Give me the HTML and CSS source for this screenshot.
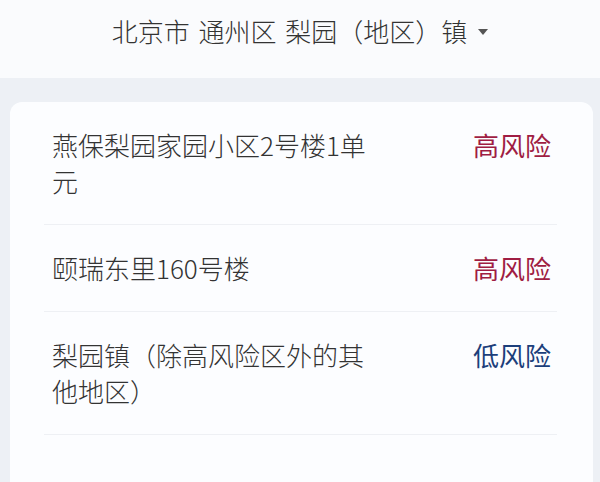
FILE: index.html
```html
<!DOCTYPE html>
<html lang="zh-CN">
<head>
  <meta charset="UTF-8">
  <title>风险等级</title>
  <link rel="stylesheet" href="styles.css">
</head>
<body>
  <div class="header">
    <span class="area">北京市 通州区 梨园（地区）镇</span>
    <span class="arrow"></span>
  </div>

  <div class="card">
    <div class="row">
      <span class="place">燕保梨园家园小区2号楼1单元</span>
      <span class="level high">高风险</span>
    </div>
    <div class="row">
      <span class="place">颐瑞东里160号楼</span>
      <span class="level high">高风险</span>
    </div>
    <div class="row">
      <span class="place">梨园镇（除高风险区外的其他地区）</span>
      <span class="level low">低风险</span>
    </div>
  </div>
</body>
</html>
```

FILE: styles.css
```css
* {
  margin: 0;
  padding: 0;
  box-sizing: border-box;
}

body {
  font-family: "Noto Sans CJK SC", "Noto Sans", sans-serif;
  font-weight: 300;
  background-color: #edf0f5;
  color: #333;
  height: 482px;
  overflow: hidden;
}

.header {
  height: 78px;
  background-color: #fafbfd;
  display: flex;
  justify-content: center;
  align-items: flex-start;
  padding-top: 13px;
  font-size: 26px;
  line-height: 36px;
}

.area {
  word-spacing: 3px;
}

.arrow {
  width: 0;
  height: 0;
  border-left: 5px solid transparent;
  border-right: 5px solid transparent;
  border-top: 6px solid #555;
  margin-left: 11px;
  margin-top: 16px;
}

.card {
  margin: 24px 7px 0 10px;
  background-color: #fcfdff;
  border-radius: 12px;
  padding: 0 36px 0 34px;
  height: 400px;
}

.row {
  display: flex;
  justify-content: space-between;
  align-items: flex-start;
  padding: 25px 6px 25px 8px;
  border-bottom: 1px solid #eef0f4;
  font-size: 26px;
  line-height: 36px;
}

.place {
  max-width: 325px;
  color: #333;
}

.level {
  font-weight: 400;
}

.level.high {
  color: #a01d43;
}

.level.low {
  color: #1c3f7b;
}
```
